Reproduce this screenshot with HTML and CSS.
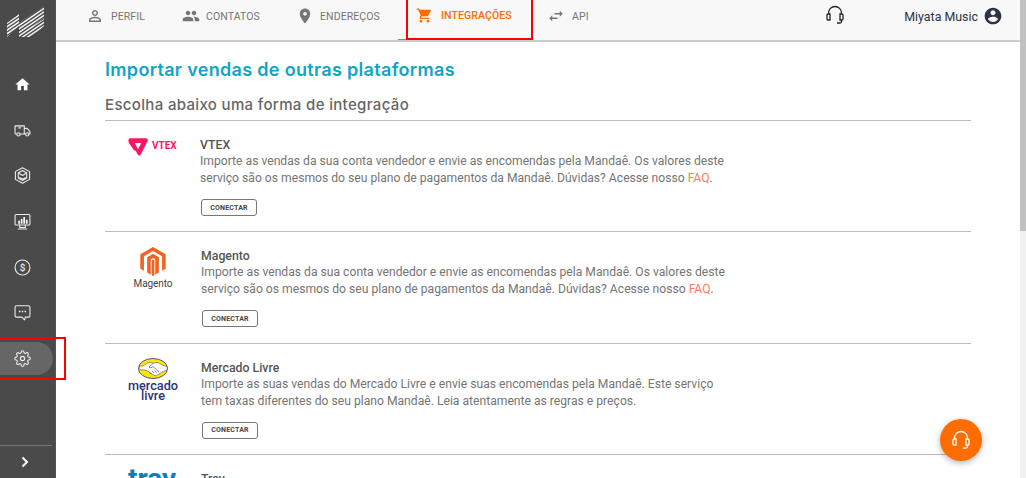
FILE: index.html
```html
<!DOCTYPE html>
<html lang="pt-BR">
<head>
<meta charset="utf-8">
<title>Integrações</title>
<link rel="stylesheet" href="styles.css">
</head>
<body>
<div class="app">
  <aside class="sidebar">
    <svg class="logo" viewBox="0 0 38 32" aria-hidden="true">
      <defs>
        <clipPath id="logoClip"><path d="M0 17 12 8V20L0 31ZM12 31V17L37 0V13L25 21V31ZM25 31V31L37 20V12L25 21Z"/></clipPath>
      </defs>
      <g clip-path="url(#logoClip)" stroke="#f4f4f4" stroke-width="1.500" fill="none">
        <path d="M-4 13 44 -20M-4 16.500 44 -16.500M-4 20 44 -13M-4 23.500 44 -9.500M-4 27 44 -6M-4 30.500 44 -2.500M-4 34 44 1M-4 37.500 44 4.500M-4 41 44 8M-4 44.500 44 11.500M-4 48 44 15"/>
      </g>
    </svg>
    <nav class="side-nav">
      <a class="side-item"><svg class="side-icon" viewBox="0 0 24 24"><path fill="#fff" d="M10 20v-6h4v6h5v-8h3L12 3 2 12h3v8z"/></svg></a>
      <a class="side-item"><svg class="side-icon" viewBox="0 0 24 24"><g class="line"><path d="M4 17H2.500a1 1 0 0 1-1-1V5.500h13V17H8.500M14.500 9h4l4 4.500V17h-1.500M14.500 17h2"/><circle cx="6.300" cy="17.500" r="2.200"/><circle cx="18.700" cy="17.500" r="2.200"/></g><path fill="#bbb" d="M6 6.500h4v3H6z"/></svg></a>
      <a class="side-item"><svg class="side-icon" viewBox="0 0 24 24"><g class="line"><path d="M12 1 22 6.500v11L12 23 2 17.500v-11z"/><path d="M12 5 18 8.500v7L12 19 6 15.500v-7zM6 8.500 12 12l6-3.500M8 15l4 2 4-2"/></g></svg></a>
      <a class="side-item"><svg class="side-icon" viewBox="0 0 24 24"><g class="line"><rect x="1.500" y="2" width="21" height="15" rx="1.500"/><path d="M8 17v3.500h8V17M6 22.500h12"/></g><path fill="#fff" d="M6 11h2.400v4H6zM9.600 8.500H12V15H9.600zM13.200 5.500h2.400V15h-2.400zM16.800 9.500h2.400V15h-2.400z"/></svg></a>
      <a class="side-item"><svg class="side-icon" viewBox="0 0 24 24"><circle class="line" cx="12" cy="12" r="10.500"/><text class="dollar" x="12" y="17" text-anchor="middle">$</text></svg></a>
      <a class="side-item"><svg class="side-icon" viewBox="0 0 24 24"><g class="line"><path d="M3.500 2.500h17a2 2 0 0 1 2 2v12a2 2 0 0 1-2 2h-4.500l-1 4-4-4h-7.500a2 2 0 0 1-2-2v-12a2 2 0 0 1 2-2z"/></g><path fill="#fff" d="M7 9.500h2v2H7zM11 9.500h2v2h-2zM15 9.500h2v2h-2z"/></svg></a>
      <a class="side-item side-item-active"><svg class="side-icon" viewBox="0 0 24 24"><g class="line"><circle cx="12" cy="12" r="3"/><path d="M19.400 15a1.650 1.650 0 0 0 .33 1.820l.06.06a2 2 0 0 1 0 2.830 2 2 0 0 1-2.830 0l-.06-.06a1.650 1.650 0 0 0-1.820-.33 1.650 1.650 0 0 0-1 1.510V21a2 2 0 0 1-2 2 2 2 0 0 1-2-2v-.09A1.650 1.650 0 0 0 9 19.400a1.650 1.650 0 0 0-1.820.33l-.06.06a2 2 0 0 1-2.830 0 2 2 0 0 1 0-2.830l.06-.06a1.650 1.650 0 0 0 .33-1.820 1.650 1.650 0 0 0-1.510-1H3a2 2 0 0 1-2-2 2 2 0 0 1 2-2h.09A1.650 1.650 0 0 0 4.600 9a1.650 1.650 0 0 0-.33-1.820l-.06-.06a2 2 0 0 1 0-2.830 2 2 0 0 1 2.830 0l.06.06a1.650 1.650 0 0 0 1.820.33H9a1.650 1.650 0 0 0 1-1.510V3a2 2 0 0 1 2-2 2 2 0 0 1 2 2v.09a1.650 1.650 0 0 0 1 1.510 1.650 1.650 0 0 0 1.820-.33l.06-.06a2 2 0 0 1 2.830 0 2 2 0 0 1 0 2.830l-.06.06a1.650 1.650 0 0 0-.33 1.820V9a1.650 1.650 0 0 0 1.510 1H21a2 2 0 0 1 2 2 2 2 0 0 1-2 2h-.09a1.650 1.650 0 0 0-1.510 1z"/></g></svg></a>
    </nav>
    <div class="side-foot"><svg class="chevron" viewBox="0 0 10 12"><path d="M2.500 1.500 7 6l-4.500 4.500" fill="none" stroke="#fff" stroke-width="2"/></svg></div>
  </aside>

  <main class="main">
    <header class="topbar">
      <nav class="tabs">
        <a class="tab tab-perfil"><svg class="tab-icon" viewBox="0 0 24 24"><path d="M12 5.900c1.160 0 2.100.94 2.100 2.100s-.94 2.100-2.100 2.100S9.900 9.160 9.900 8s.94-2.100 2.100-2.100m0 9c2.970 0 6.100 1.460 6.100 2.100v1.100H5.900V17c0-.64 3.130-2.100 6.100-2.100M12 4C9.790 4 8 5.790 8 8s1.790 4 4 4 4-1.790 4-4-1.790-4-4-4zm0 9c-2.670 0-8 1.340-8 4v3h16v-3c0-2.660-5.330-4-8-4z"/></svg>PERFIL</a>
        <a class="tab tab-contatos"><svg class="tab-icon" viewBox="0 0 24 24"><path d="M16 11c1.660 0 2.990-1.340 2.990-3S17.660 5 16 5c-1.660 0-3 1.340-3 3s1.340 3 3 3zm-8 0c1.660 0 2.990-1.340 2.990-3S9.660 5 8 5C6.340 5 5 6.340 5 8s1.340 3 3 3zm0 2c-2.330 0-7 1.170-7 3.500V19h14v-2.500c0-2.330-4.670-3.500-7-3.500zm8 0c-.29 0-.62.02-.97.05 1.160.84 1.970 1.970 1.970 3.450V19h6v-2.500c0-2.330-4.670-3.500-7-3.500z"/></svg>CONTATOS</a>
        <a class="tab tab-enderecos"><svg class="tab-icon" viewBox="0 0 24 24"><path d="M12 2C8.130 2 5 5.130 5 9c0 5.250 7 13 7 13s7-7.750 7-13c0-3.870-3.130-7-7-7zm0 9.500c-1.380 0-2.500-1.120-2.500-2.500s1.120-2.500 2.500-2.500 2.500 1.120 2.500 2.500-1.120 2.500-2.500 2.500z"/></svg>ENDEREÇOS</a>
        <a class="tab tab-active"><svg class="tab-icon" viewBox="0 0 24 24"><path d="M7 18c-1.100 0-1.990.9-1.990 2S5.900 22 7 22s2-.9 2-2-.9-2-2-2zM1 2v2h2l3.600 7.590-1.350 2.450c-.16.28-.25.61-.25.96 0 1.100.9 2 2 2h12v-2H7.420c-.14 0-.25-.11-.25-.25l.03-.12.9-1.630h7.450c.75 0 1.410-.41 1.750-1.030l3.580-6.490c.08-.14.12-.31.12-.48 0-.55-.45-1-1-1H5.210l-.94-2H1zm16 16c-1.100 0-1.990.9-1.990 2s.89 2 1.990 2 2-.9 2-2-.9-2-2-2z"/></svg>INTEGRAÇÕES</a>
        <a class="tab tab-api"><svg class="tab-icon" viewBox="0 0 24 24"><path d="M6.990 11L3 15l3.990 4v-3H14v-2H6.990v-3zM21 9l-3.990-4v3H10v2h7.010v3L21 9z"/></svg>API</a>
      </nav>
      <div class="top-right">
        <svg class="head-icon" viewBox="0 0 20 20"><path class="head-line" d="M3.500 9.500V8a6.500 6.500 0 0 1 13 0v1.500M3 9h2v6H3a1 1 0 0 1-1-1v-4a1 1 0 0 1 1-1zM15 9h2a1 1 0 0 1 1 1v4a1 1 0 0 1-1 1h-2zM16.500 15v1.500a1.500 1.500 0 0 1-1.500 1.500h-3"/></svg>
        <span class="user-name">Miyata Music</span>
        <svg class="user-icon" viewBox="0 0 24 24"><path d="M12 2C6.480 2 2 6.480 2 12s4.480 10 10 10 10-4.480 10-10S17.520 2 12 2zm0 3c1.660 0 3 1.340 3 3s-1.340 3-3 3-3-1.340-3-3 1.340-3 3-3zm0 14.200c-2.500 0-4.710-1.280-6-3.220.03-1.990 4-3.080 6-3.080 1.990 0 5.970 1.090 6 3.080-1.290 1.940-3.500 3.220-6 3.220z"/></svg>
      </div>
    </header>

    <section class="content">
      <h1 class="title">Importar vendas de outras plataformas</h1>
      <h2 class="subtitle">Escolha abaixo uma forma de integração</h2>

      <article class="row row-vtex">
        <div class="row-logo">
          <svg class="vtex-mark" viewBox="0 0 22 19"><path fill="#f71963" fill-rule="evenodd" d="M2.200 0h17.600c1.500 0 2.500 1.400 1.800 2.800l-7.500 15c-.7 1.500-2.800 1.500-3.500 0L8.500 13.500 6.500 13 1 5C0 3 .5 0 2.200 0zM7.500 5l3.500 7 3.500-7z"/></svg>
          <span class="vtex-word">VTEX</span>
        </div>
        <div class="row-body">
          <h3 class="row-title">VTEX</h3>
          <p class="row-text">Importe as vendas da sua conta vendedor e envie as encomendas pela Mandaê. Os valores deste serviço são os mesmos do seu plano de pagamentos da Mandaê. Dúvidas? Acesse nosso <a class="faq">FAQ</a>.</p>
          <button class="connect">CONECTAR</button>
        </div>
      </article>

      <article class="row">
        <div class="row-logo row-logo-magento">
          <svg class="magento-mark" viewBox="0 0 28 32"><path fill="#f26322" d="M14 0 28 8v16l-4 2.300V10.200L14 4.500 4 10.200v16.100L0 24V8z"/><path fill="#f26322" d="M14 7.500l6.500 3.700V28l-4 2.300V13.500L14 12l-2.500 1.500v16.800l-4-2.300V11.200z"/><path fill="#f26322" d="M14 32l-1.500-.9V14.700L14 14l1.500.7v16.400z"/></svg>
          <span class="magento-word">Magento</span>
        </div>
        <div class="row-body">
          <h3 class="row-title">Magento</h3>
          <p class="row-text">Importe as vendas da sua conta vendedor e envie as encomendas pela Mandaê. Os valores deste serviço são os mesmos do seu plano de pagamentos da Mandaê. Dúvidas? Acesse nosso <a class="faq">FAQ</a>.</p>
          <button class="connect">CONECTAR</button>
        </div>
      </article>

      <article class="row">
        <div class="row-logo row-logo-ml">
          <svg class="ml-mark" viewBox="0 0 30 21"><ellipse cx="15" cy="10.500" rx="14.500" ry="10" fill="#ffe600" stroke="#2d3277" stroke-width=".8"/><path fill="#fff" stroke="#2d3277" stroke-width=".5" d="M1.500 8C6 9 9 4.500 12 4.500c2 0 3 1 3 1s2-1 4-1c3 0 6 4.500 9.500 3.500 1 1.500 1 3.500 0 4.500-2 .5-4 1-5 2l-5 3c-1 .5-2 0-3-.5-2-1-4-3-7-4.500-2-.7-5-.7-6.500-.7-1-1-1-2 0-3z"/><path fill="none" stroke="#2d3277" stroke-width=".6" d="M15 5.500 11 9c1 1.500 3 .5 4-.5l6 5.500M13 16l-2-2M16 15l-2-2M18.500 14.500 16.500 12.500"/></svg>
          <span class="ml-word">mercado<br>livre</span>
        </div>
        <div class="row-body">
          <h3 class="row-title">Mercado Livre</h3>
          <p class="row-text">Importe as suas vendas do Mercado Livre e envie suas encomendas pela Mandaê. Este serviço tem taxas diferentes do seu plano Mandaê. Leia atentamente as regras e preços.</p>
          <button class="connect">CONECTAR</button>
        </div>
      </article>

      <article class="row">
        <div class="row-logo row-logo-tray"><span class="tray-word">tray</span></div>
        <div class="row-body">
          <h3 class="row-title">Tray</h3>
        </div>
      </article>
    </section>
  </main>

  <div class="scrollbar"><div class="scroll-thumb"></div></div>
</div>

<div class="mark mark-tab"></div>
<div class="mark mark-side"></div>
<button class="fab" aria-label="Ajuda">
  <svg class="fab-icon" viewBox="0 0 20 20"><path class="fab-line" d="M3.500 9.500V8a6.500 6.500 0 0 1 13 0v1.500M3 9h2v6H3a1 1 0 0 1-1-1v-4a1 1 0 0 1 1-1zM15 9h2a1 1 0 0 1 1 1v4a1 1 0 0 1-1 1h-2zM16.500 15v1.500a1.500 1.500 0 0 1-1.500 1.500h-3"/></svg>
</button>
</body>
</html>
```
FILE: styles.css
```css
* { box-sizing: border-box; }
html, body { margin: 0; height: 100%; overflow: hidden; }
body { font-family: Roboto, "Liberation Sans", sans-serif; background: #fff; color: #666; }
h1, h2, h3, p { margin: 0; }

.app { display: flex; height: 478px; }

.sidebar { width: 56px; flex: none; background: #4a4a4a; display: flex; flex-direction: column; border-right: 1px solid #555; }
.logo { width: 38px; height: 32px; margin: 6px 0 0 7px; flex: none; overflow: hidden; }
.side-nav { display: flex; flex-direction: column; margin-top: 30px; flex: 1; }
.side-item { height: 33px; margin-bottom: 12.700px; width: 53px; display: flex; align-items: center; padding-left: 14px; border-radius: 0 17px 17px 0; }
.side-item-active { background: #666; }
.side-icon { width: 17px; height: 17px; }
.line { fill: none; stroke: #eee; stroke-width: 1.500; stroke-linejoin: round; stroke-linecap: round; }
.dollar { fill: #eee; font-size: 14px; font-family: Roboto, sans-serif; font-weight: 500; }
.side-foot { height: 33px; margin-right: 3px; border-top: 1px solid #777; display: flex; align-items: center; padding-left: 20px; }
.chevron { width: 10px; height: 12px; }

.main { flex: 1; min-width: 0; display: flex; flex-direction: column; }
.topbar { height: 42px; flex: none; background: #f8f8f8; border-bottom: 2px solid #ccc; display: flex; align-items: center; justify-content: space-between; }
.tabs { display: flex; height: 40px; }
.tab { display: flex; align-items: center; font-size: 10.500px; color: #757575; padding-bottom: 8px; letter-spacing: .1px; }
.tab-icon { width: 18px; height: 18px; fill: #757575; margin-right: 6px; flex: none; }
.tab-perfil { margin-left: 30px; width: 96px; }
.tab-perfil .tab-icon { margin-right: 7px; }
.tab-contatos { width: 114px; }
.tab-enderecos { width: 102px; }
.tab-active { width: 134px; padding-left: 18px; color: #ff6c00; font-weight: 500; border-bottom: 1px solid #ff6c00; }
.tab-active .tab-icon { fill: #ff6c00; width: 17px; height: 17px; margin-right: 8px; }
.tab-api { margin-left: 15px; }
.tab-api .tab-icon { margin-right: 7px; }
.top-right { display: flex; align-items: center; margin-right: 17px; padding-bottom: 8px; }
.head-icon { width: 20px; height: 20px; margin-right: 59px; margin-top: -3px; }
.head-line { fill: none; stroke: #222; stroke-width: 1.300; }
.user-name { font-size: 12.400px; color: #2b3440; }
.user-icon { width: 20px; height: 20px; fill: #2b3440; margin-left: 5px; }

.content { flex: 1; padding: 16px 49px 0 49px; overflow: hidden; }
.title { font-family: Inter, sans-serif; font-size: 18px; line-height: 24px; font-weight: 600; color: #0ea5c9; letter-spacing: .32px; }
.subtitle { font-family: Inter, sans-serif; font-size: 15px; line-height: 20px; font-weight: 500; color: #666; letter-spacing: .34px; margin-top: 13px; padding-bottom: 5px; }

.row { border-top: 1px solid #bbb; height: 111.330px; flex: none; display: flex; }
.row-logo { width: 95px; flex: none; display: flex; align-items: flex-start; padding: 17px 0 0 23px; }
.row-logo-magento, .row-logo-ml, .row-logo-tray { width: 96px; }
.row-logo-magento { flex-direction: column; align-items: center; padding: 15px 0 0; }
.row-logo-ml { flex-direction: column; align-items: center; padding: 14px 0 0; }
.row-logo-tray { padding: 11px 0 0 23px; }
.row-body { flex: 1; padding-top: 17px; max-width: 530px; }
.row-title { font-size: 12.300px; line-height: 15px; font-weight: 500; color: #555; }
.row-text { font-size: 12.150px; line-height: 17px; color: #757575; }
.faq { color: #ff7b5a; }
.connect { display: block; margin: 12px 0 0 1px; width: 56px; height: 17px; padding: 0; background: #fff; border: 1.500px solid #777; border-radius: 3px; font-family: Roboto, sans-serif; font-size: 7px; font-weight: 700; color: #444; letter-spacing: .2px; }

.vtex-mark { width: 20px; height: 18px; flex: none; }
.vtex-word { font-size: 10px; font-weight: 700; color: #f71963; margin: 2px 0 0 4px; }
.magento-mark { width: 26px; height: 29px; }
.magento-word { font-size: 10px; color: #444; letter-spacing: -.1px; margin-top: 2px; }
.ml-mark { width: 30px; height: 21px; }
.ml-word { font-size: 12.700px; line-height: 10px; font-weight: 500; color: #2d3277; text-align: center; margin-top: 2px; }
.tray-word { font-size: 28px; font-weight: 700; color: #0d7fb8; line-height: 26px; }

.scrollbar { width: 6px; flex: none; background: #f1f1f1; }
.scroll-thumb { height: 231px; background: #c1c1c1; }

.mark { position: absolute; border: 2px solid #f00; pointer-events: none; }
.mark-tab { left: 406px; top: -2px; width: 127px; height: 42px; }
.mark-side { left: -2px; top: 337px; width: 68px; height: 43px; }

.fab { position: absolute; left: 940px; top: 419px; width: 42px; height: 42px; border: 0; border-radius: 50%; padding: 0; background: #ff6c00; box-shadow: 0 2px 6px rgba(0,0,0,.3); display: flex; align-items: center; justify-content: center; }
.fab-icon { width: 20px; height: 20px; }
.fab-line { fill: none; stroke: #fff; stroke-width: 1.300; }
```
